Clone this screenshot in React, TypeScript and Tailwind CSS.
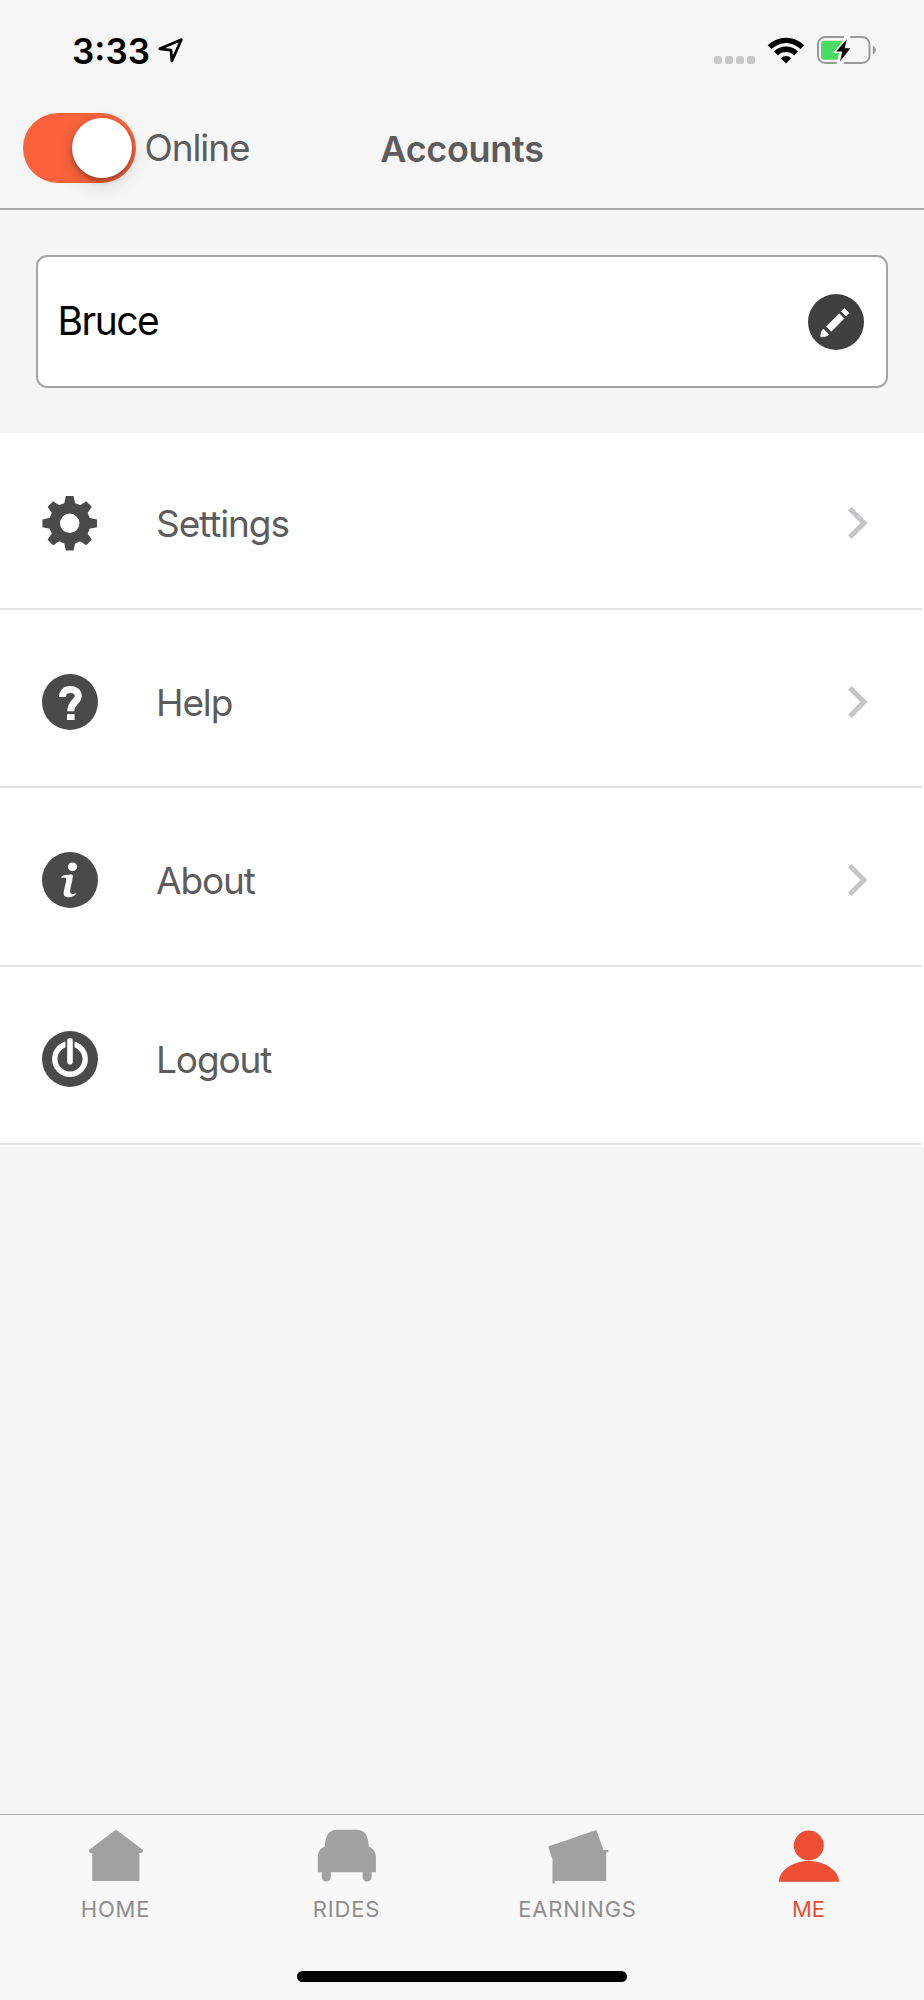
import React from 'react';

const GEAR_ANGLES = [0, 45, 90, 135, 180, 225, 270, 315];

const LocationArrow = () => (
  <svg width="26" height="26" viewBox="0 0 26 26" fill="none" stroke="#000" strokeWidth="2.8" strokeLinejoin="round">
    <path d="M2.8 11.8 24.3 2.8 14.9 24 14 13.2Z" />
  </svg>
);

const WifiIcon = () => (
  <svg width="38" height="27" viewBox="0 0 38 27">
    <path d="M.7 8.2A26 26 0 0 1 37.3 8.2L33.5 12.1A20.5 20.5 0 0 0 4.5 12.1Z" />
    <path d="M7 14.5A17 17 0 0 1 31 14.5L27.1 18.4A11.5 11.5 0 0 0 10.9 18.4Z" />
    <path d="M13.7 21.2A7.5 7.5 0 0 1 24.3 21.2L19 26.5Z" />
  </svg>
);

const BatteryIcon = () => (
  <svg width="60" height="28" viewBox="0 0 60 28">
    <rect x="1" y="1" width="51.5" height="26" rx="7.2" fill="none" stroke="#9a9a9a" strokeWidth="2" />
    <path d="M55.8 9.5C60 11.5 60 16.5 55.8 18.5Z" fill="#9a9a9a" />
    <rect x="4" y="4.7" width="25" height="19" rx="3.4" fill="#4cd964" />
    <path d="M29 0h3L25 28h-4L24 16Z M29.7 3.2 19.3 15.5H25.3L23 25.5 33.3 12.2H27.7Z" fill="#f6f6f6" stroke="#f6f6f6" strokeWidth="3" />
    <path d="M29.7 3.2 19.3 15.5H25.3L23 25.5 33.3 12.2H27.7Z" fill="#000" />
  </svg>
);

const PencilIcon = () => (
  <svg width="56" height="56" viewBox="0 0 56 56">
    <circle cx="28" cy="28" r="28" fill="#404040" />
    <g fill="#fff" stroke="#fff" strokeWidth="0.6" strokeLinejoin="round">
      <path d="M12.8 42.8C12.6 39.4 13.6 36.8 15.4 35L20.8 40.6C19 42.3 16.2 43 12.8 42.8Z" />
      <path d="M31.3 19.7 36 24.4 23.3 37.4 18.4 32.5Z" />
      <path d="M33.3 17.4 36.3 14.4 41.1 19.1 38.1 22.1Z" />
    </g>
  </svg>
);

const GearIcon = () => (
  <svg width="56" height="56" viewBox="-27.7 -28.3 56 56">
    <g fill="#4a4a4a">
      {GEAR_ANGLES.map((angle) => (
        <path key={angle} d="M-3.9-27.3H3.9L6-17H-6Z" transform={`rotate(${angle})`} />
      ))}
    </g>
    <circle r="15.2" fill="none" stroke="#4a4a4a" strokeWidth="11" />
  </svg>
);

const HelpIcon = () => (
  <svg width="56" height="56" viewBox="0 0 56 56">
    <circle cx="28" cy="28" r="28" fill="#4a4a4a" />
    <path d="M20.4 23.1C20.4 18.3 23.6 15.6 28.3 15.6 33 15.6 36.2 18 36.2 21.9 36.2 28 28.8 28 28.8 37.2" fill="none" stroke="#fff" strokeWidth="7" />
    <path d="M25 40.2h7.6v5.8H25Z" fill="#fff" />
  </svg>
);

const InfoIcon = () => (
  <svg width="56" height="56" viewBox="0 0 56 56">
    <circle cx="28" cy="28" r="28" fill="#4a4a4a" />
    <ellipse cx="30.5" cy="14.8" rx="4.7" ry="4.2" fill="#fff" />
    <path d="M19.6 24.2C23 23 29.3 21.8 30.6 23 31.8 24.6 27.8 36.5 28.2 40 28.5 42.6 31.5 42.2 34.6 41.3 33 44.3 29.4 45.4 26 45.3 22 45.1 21 42.8 22 38.3 23 33.6 24.8 28.4 24 26.4 23.4 25.2 21.5 25.6 19.5 26Z" fill="#fff" />
  </svg>
);

const PowerIcon = () => (
  <svg width="56" height="56" viewBox="0 0 56 56">
    <circle cx="28" cy="28" r="28" fill="#4a4a4a" />
    <circle cx="28" cy="28" r="15.2" fill="none" stroke="#fff" strokeWidth="5.4" />
    <path d="M28 9.8V30.8" stroke="#4a4a4a" strokeWidth="9" strokeLinecap="round" />
    <path d="M28 9.8V30.8" stroke="#fff" strokeWidth="5.6" strokeLinecap="round" />
  </svg>
);

const ChevronIcon = () => (
  <svg width="20" height="34" viewBox="0 0 20 34" fill="none" stroke="#c4c5c7" strokeWidth="5">
    <path d="M1.8 2.7 16 17 1.8 31.3" />
  </svg>
);

const HomeIcon = () => (
  <svg width="62" height="56" viewBox="0 0 62 56" fill="currentColor">
    <path d="M29.8 2.5Q31 1.6 32.2 2.5L57.4 21.6C58.8 23.2 57.6 25 56 25H54.4V53H7.2V25H6C4.2 25 3.2 23 4.6 21.6Z" />
  </svg>
);

const CarIcon = () => (
  <svg width="62" height="56" viewBox="0 0 62 56" fill="currentColor">
    <path d="M8.7 18.5C9.5 8 12.5 1.7 21 1.7H41C49 1.7 52.2 8 52.8 18.5 57.2 20.5 59.9 24.3 59.9 29V44.3H55.6V49A4.5 4.5 0 0 1 46.6 49V44.3H14.8V49A4.5 4.5 0 0 1 5.8 49V44.3H1.8V29C1.8 24.3 4.3 20.3 8.7 18.5Z" />
  </svg>
);

const EarningsIcon = () => (
  <svg width="62" height="56" viewBox="0 0 62 56" fill="currentColor">
    <path d="M1.2 18.6 49.3 2 56.5 22H61.2V24.3H59.2V53H7.8V55.5H5.5V31.5Z" />
  </svg>
);

const PersonIcon = () => (
  <svg width="62" height="56" viewBox="0 0 62 56" fill="currentColor">
    <circle cx="30.8" cy="17.5" r="15" />
    <path d="M.8 53.8C.8 43 14 32.9 30.8 32.9S61 43 61 53.8Z" />
  </svg>
);

interface MenuRowProps {
  label: string;
  icon: React.ReactNode;
  hasChevron?: boolean;
}

const MenuRow: React.FC<MenuRowProps> = ({ label, icon, hasChevron = true }) => (
  <li className="mr-[2px] flex h-[178.5px] items-center border-b-2 border-[#e2e2e2] pl-[42px] pr-[54px] first:-mt-[2px]">
    <div className="w-14 shrink-0 pt-[8px]">{icon}</div>
    <span className="ml-[58px] flex-1 pt-[9px] text-[37px] tracking-[-1.1px] text-[#5c5c5c]">{label}</span>
    {hasChevron && <div className="pt-[8px]"><ChevronIcon /></div>}
  </li>
);

interface TabProps {
  label: string;
  icon: React.ReactNode;
  active?: boolean;
}

const Tab: React.FC<TabProps> = ({ label, icon, active }) => (
  <button className={active ? 'flex flex-1 flex-col items-center text-[#ee4e34]' : 'flex flex-1 flex-col items-center text-[#a1a1a1]'}>
    {icon}
    <span className={active ? 'mt-[9px] text-[22px] leading-[32px] font-normal' : 'mt-[9px] text-[22px] leading-[32px] font-normal tracking-[0.8px] text-[#8e8e8e]'}>
      {label}
    </span>
  </button>
);

export default function App() {
  return (
    <div className="flex h-[2000px] w-[924px] flex-col overflow-hidden bg-[#f5f5f5] font-['Inter','Liberation_Sans',sans-serif]">
      <div className="flex h-[100px] shrink-0 items-start justify-between bg-[#f6f6f6] pl-[72px] pr-[47.5px]">
        <div className="flex items-start">
          <span className="w-[85px] pt-[26px] text-[35px] leading-[50px] font-semibold text-black">3:33</span>
          <div className="pt-[37px]"><LocationArrow /></div>
        </div>
        <div className="flex pt-[36px]">
          <div className="flex gap-[3px] pt-[19.5px]">
            <span className="size-[8px] rounded-[2.5px] bg-[#c8c8c8]" />
            <span className="size-[8px] rounded-[2.5px] bg-[#c8c8c8]" />
            <span className="size-[8px] rounded-[2.5px] bg-[#c8c8c8]" />
            <span className="size-[8px] rounded-[2.5px] bg-[#c8c8c8]" />
          </div>
          <div className="ml-[12px] pt-[0.5px]"><WifiIcon /></div>
          <div className="ml-[12px]"><BatteryIcon /></div>
        </div>
      </div>

      <header className="grid h-[110px] shrink-0 grid-cols-[1fr_auto_1fr] items-start border-b-2 border-[#ababab] bg-[#f6f6f6] px-[22.5px]">
        <div className="flex items-start">
          <button className="mt-[13px] flex h-[69.5px] w-[113.5px] items-center justify-end rounded-full bg-[#fa633c] pr-[4px]">
            <span className="size-[60.5px] rounded-full bg-white shadow-[0_7px_18px_rgba(0,0,0,0.15),0_3px_5px_rgba(0,0,0,0.28)]" />
          </button>
          <span className="ml-[8.5px] pt-[23px] text-[37px] leading-[50px] tracking-[-1.1px] text-[#5c5c5c]">Online</span>
        </div>
        <h1 className="pt-[24px] text-[36px] leading-[50px] font-semibold tracking-[-0.3px] text-[#5c5c5c]">Accounts</h1>
      </header>

      <section className="h-[223px] shrink-0 px-[36px] pt-[45px]">
        <div className="flex h-[133px] items-center justify-between rounded-[11px] border-2 border-[#a4a4a4] bg-white pl-[19.5px] pr-[22px]">
          <span className="text-[39px] tracking-[-1.5px] text-black">Bruce</span>
          <div className="pt-px"><PencilIcon /></div>
        </div>
      </section>

      <ul className="shrink-0 bg-white pb-[2px]">
        <MenuRow label="Settings" icon={<GearIcon />} />
        <MenuRow label="Help" icon={<HelpIcon />} />
        <MenuRow label="About" icon={<InfoIcon />} />
        <MenuRow label="Logout" icon={<PowerIcon />} hasChevron={false} />
      </ul>

      <div className="flex-1" />

      <nav className="flex h-[186px] shrink-0 flex-col items-center border-t border-[#b4b4b4] bg-[#f8f8f8]">
        <div className="flex h-[156px] w-full pt-[13px]">
          <Tab label="HOME" icon={<HomeIcon />} />
          <Tab label="RIDES" icon={<CarIcon />} />
          <Tab label="EARNINGS" icon={<EarningsIcon />} />
          <Tab label="ME" icon={<PersonIcon />} active />
        </div>
        <div className="h-[11px] w-[330px] rounded-full bg-black" />
      </nav>
    </div>
  );
}
